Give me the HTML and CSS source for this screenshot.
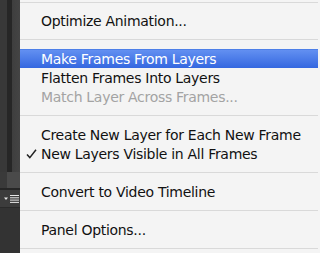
FILE: index.html
```html
<!DOCTYPE html>
<html>
<head>
<meta charset="utf-8">
<link rel="stylesheet" href="styles.css">
</head>
<body>
<div class="screen">
  <div class="strip">
    <div class="strip-top"></div>
    <div class="strip-mid"></div>
    <div class="strip-bar">
      <svg class="panel-icon" width="16" height="8" viewBox="0 0 16 8">
        <path d="M0 2.5h4l-2 2.5z" fill="#e6e6e6"/>
        <rect x="6" y="0" width="9" height="1" fill="#e6e6e6"/>
        <rect x="6" y="2.3" width="9" height="1" fill="#e6e6e6"/>
        <rect x="6" y="4.6" width="9" height="1" fill="#e6e6e6"/>
        <rect x="6" y="6.9" width="9" height="1" fill="#e6e6e6"/>
      </svg>
    </div>
    <div class="strip-bottom"></div>
  </div>
  <div class="menu">
    <div class="sep sep-top"></div>
    <div class="item">Optimize Animation...</div>
    <div class="sep"></div>
    <div class="item active">Make Frames From Layers</div>
    <div class="item">Flatten Frames Into Layers</div>
    <div class="item disabled">Match Layer Across Frames...</div>
    <div class="sep"></div>
    <div class="item">Create New Layer for Each New Frame</div>
    <div class="item"><svg class="check" width="11" height="10" viewBox="0 0 11 10"><path d="M1 5.5 L3.8 8.6 L10 0.8" fill="none" stroke="#222" stroke-width="1.5"/></svg>New Layers Visible in All Frames</div>
    <div class="sep"></div>
    <div class="item">Convert to Video Timeline</div>
    <div class="sep"></div>
    <div class="item">Panel Options...</div>
    <div class="sep"></div>
  </div>
</div>
</body>
</html>
```

FILE: styles.css
```css
html, body {
  margin: 0;
  padding: 0;
}
body {
  width: 318px;
  height: 253px;
  overflow: hidden;
  background: #f4f4f4;
  font-family: "DejaVu Sans", "Liberation Sans", sans-serif;
}
.screen {
  display: flex;
  width: 318px;
  height: 253px;
}
.strip {
  width: 20px;
  flex: none;
  display: flex;
  flex-direction: column;
  background: linear-gradient(to right, #383838 0, #383838 7px, #262626 7px, #262626 12px, #3e3e3e 12px, #444 20px);
}
.strip-top {
  height: 172px;
}
.strip-mid {
  height: 16px;
  background: linear-gradient(to right, #3a3a3a 0, #3a3a3a 7px, #4a4a4a 7px);
  border-bottom: 2px solid #262626;
}
.strip-bar {
  height: 17px;
  background: #3c3c3c;
  border-bottom: 1px solid #2a2a2a;
  display: flex;
  align-items: center;
  padding-left: 4px;
}
.panel-icon {
  display: block;
}
.strip-bottom {
  flex: 1;
  background: #333;
}
.menu {
  flex: 1;
  display: flex;
  flex-direction: column;
  background: #f4f4f4;
}
.item {
  box-sizing: border-box;
  height: 19px;
  line-height: 17px;
  padding-top: 2px;
  padding-left: 21px;
  font-size: 14px;
  letter-spacing: -0.3px;
  color: #111;
  white-space: nowrap;
  position: relative;
}
.item.active {
  color: #fff;
  background: linear-gradient(#6592f2, #3467e0);
  box-shadow: inset 0 1px 0 #4d7fe8;
}
.item.disabled {
  color: #a3a3a3;
}
.check {
  position: absolute;
  left: 6px;
  top: 5px;
}
.sep {
  height: 19px;
  flex: none;
  display: flex;
  align-items: center;
}
.sep::before {
  content: "";
  display: block;
  width: 100%;
  height: 1px;
  background: #d9d9d9;
}
.sep-top {
  height: 11px;
  align-items: flex-start;
  padding-top: 2px;
  box-sizing: border-box;
}
```
